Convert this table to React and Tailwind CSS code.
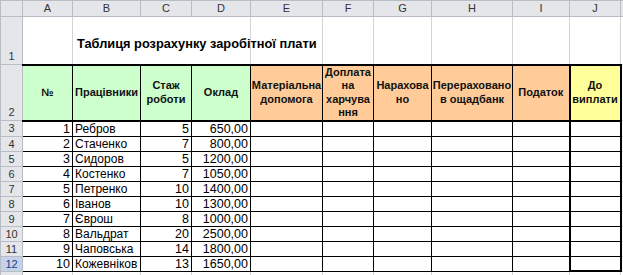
const cols = [
  { key: "A", w: 50 },
  { key: "B", w: 68 },
  { key: "C", w: 51 },
  { key: "D", w: 59 },
  { key: "E", w: 72 },
  { key: "F", w: 51 },
  { key: "G", w: 58 },
  { key: "H", w: 81 },
  { key: "I", w: 57 },
  { key: "J", w: 51 },
];

const heads = [
  { text: "№", bg: "bg-[#ccffcc]" },
  { text: "Працівники", bg: "bg-[#ccffcc]" },
  { text: "Стаж роботи", bg: "bg-[#ccffcc]" },
  { text: "Оклад", bg: "bg-[#ccffcc]" },
  { text: "Матеріальна допомога", bg: "bg-[#ffcc99]" },
  { text: "Доплата на харчува ння", bg: "bg-[#ffcc99]" },
  { text: "Нарахова но", bg: "bg-[#ffcc99]" },
  { text: "Перераховано в ощадбанк", bg: "bg-[#ffcc99]" },
  { text: "Податок", bg: "bg-[#ffcc99]" },
  { text: "До виплати", bg: "bg-[#ffff99]" },
];

const rows = [
  [1, "Ребров", 5, "650,00"],
  [2, "Стаченко", 7, "800,00"],
  [3, "Сидоров", 5, "1200,00"],
  [4, "Костенко", 7, "1050,00"],
  [5, "Петренко", 10, "1400,00"],
  [6, "Іванов", 10, "1300,00"],
  [7, "Єврош", 8, "1000,00"],
  [8, "Вальдрат", 20, "2500,00"],
  [9, "Чаповська", 14, "1800,00"],
  [10, "Кожевніков", 13, "1650,00"],
];

const rowHead =
  "border border-[#b8bcc4] bg-[#e4e6ea] text-center align-bottom text-[11px] text-[#333] font-normal p-0";

export default function App() {
  return (
    <div className="w-[623px] h-[275px] overflow-hidden bg-white font-['Liberation_Sans',Arial,sans-serif] text-black">
      <table className="w-[623px] table-fixed border-collapse">
        <colgroup>
          <col className="w-[22px]" />
          {cols.map((c) => (
            <col key={c.key} style={{ width: c.w }} />
          ))}
          <col className="w-[3px]" />
        </colgroup>
        <tbody>
          <tr className="h-[16px]">
            <td className="border border-[#b8bcc4] bg-[#e4e6ea] p-0"></td>
            {cols.map((c) => (
              <td
                key={c.key}
                className="border border-[#b8bcc4] bg-[#e4e6ea] p-0 text-center text-[11px] text-[#333] leading-[15px]"
              >
                {c.key}
              </td>
            ))}
            <td className="border border-[#b8bcc4] bg-[#e4e6ea] p-0"></td>
          </tr>
          <tr className="h-[48px]">
            <td className={rowHead}>1</td>
            <td className="border border-[#d4d4d4] p-0"></td>
            <td
              colSpan={3}
              className="border-y border-l border-[#d4d4d4] p-0 pl-[4px] whitespace-nowrap overflow-visible text-[12.8px] font-bold align-middle pt-[6px]"
            >
              Таблиця розрахунку заробітної плати
            </td>
            {cols.slice(4).map((c) => (
              <td key={c.key} className="border border-[#d4d4d4] p-0"></td>
            ))}
            <td className="border border-[#d4d4d4] p-0"></td>
          </tr>
          <tr className="h-[56px]">
            <td className={rowHead}>2</td>
            {heads.map((h, i) => (
              <td
                key={i}
                className={`${h.bg} border-y-2 ${
                  i === 9 ? "border-x-2" : "border-x"
                } border-black p-0 text-center align-middle text-[11px] font-bold leading-[13.5px] text-[#111]`}
              >
                {h.text}
              </td>
            ))}
            <td className="border border-[#d4d4d4] p-0"></td>
          </tr>
          {rows.map((r, ri) => (
            <tr key={ri} className="h-[15px]">
              <td
                className={`border border-[#b8bcc4] text-center text-[11px] font-normal p-0 leading-[14px] ${
                  ri === 9 ? "bg-[#c4d3ea] text-[#15428b]" : "bg-[#e4e6ea] text-[#333]"
                }`}
              >
                {ri + 3}
              </td>
              <td className="border border-black p-0 pr-[2px] text-right text-[12.5px] leading-[14px]">{r[0]}</td>
              <td className="border border-black p-0 pl-[2px] text-left text-[12px] leading-[14px] whitespace-nowrap overflow-hidden">
                {r[1]}
              </td>
              <td className="border border-black p-0 pr-[2px] text-right text-[12.5px] leading-[14px]">{r[2]}</td>
              <td className="border border-black p-0 pr-[2px] text-right text-[12.5px] leading-[14px]">{r[3]}</td>
              {cols.slice(4, 9).map((c) => (
                <td key={c.key} className="border border-black p-0"></td>
              ))}
              <td
                className={`border-x-2 border-t border-black p-0 ${
                  ri === 9 ? "border-b-2" : "border-b"
                }`}
              ></td>
              <td className="border border-[#d4d4d4] p-0"></td>
            </tr>
          ))}
          <tr className="h-[6px]">
            <td className="border border-[#b8bcc4] bg-[#e4e6ea] p-0"></td>
            {cols.map((c) => (
              <td key={c.key} className="border border-[#d4d4d4] p-0"></td>
            ))}
            <td className="border border-[#d4d4d4] p-0"></td>
          </tr>
        </tbody>
      </table>
    </div>
  );
}
